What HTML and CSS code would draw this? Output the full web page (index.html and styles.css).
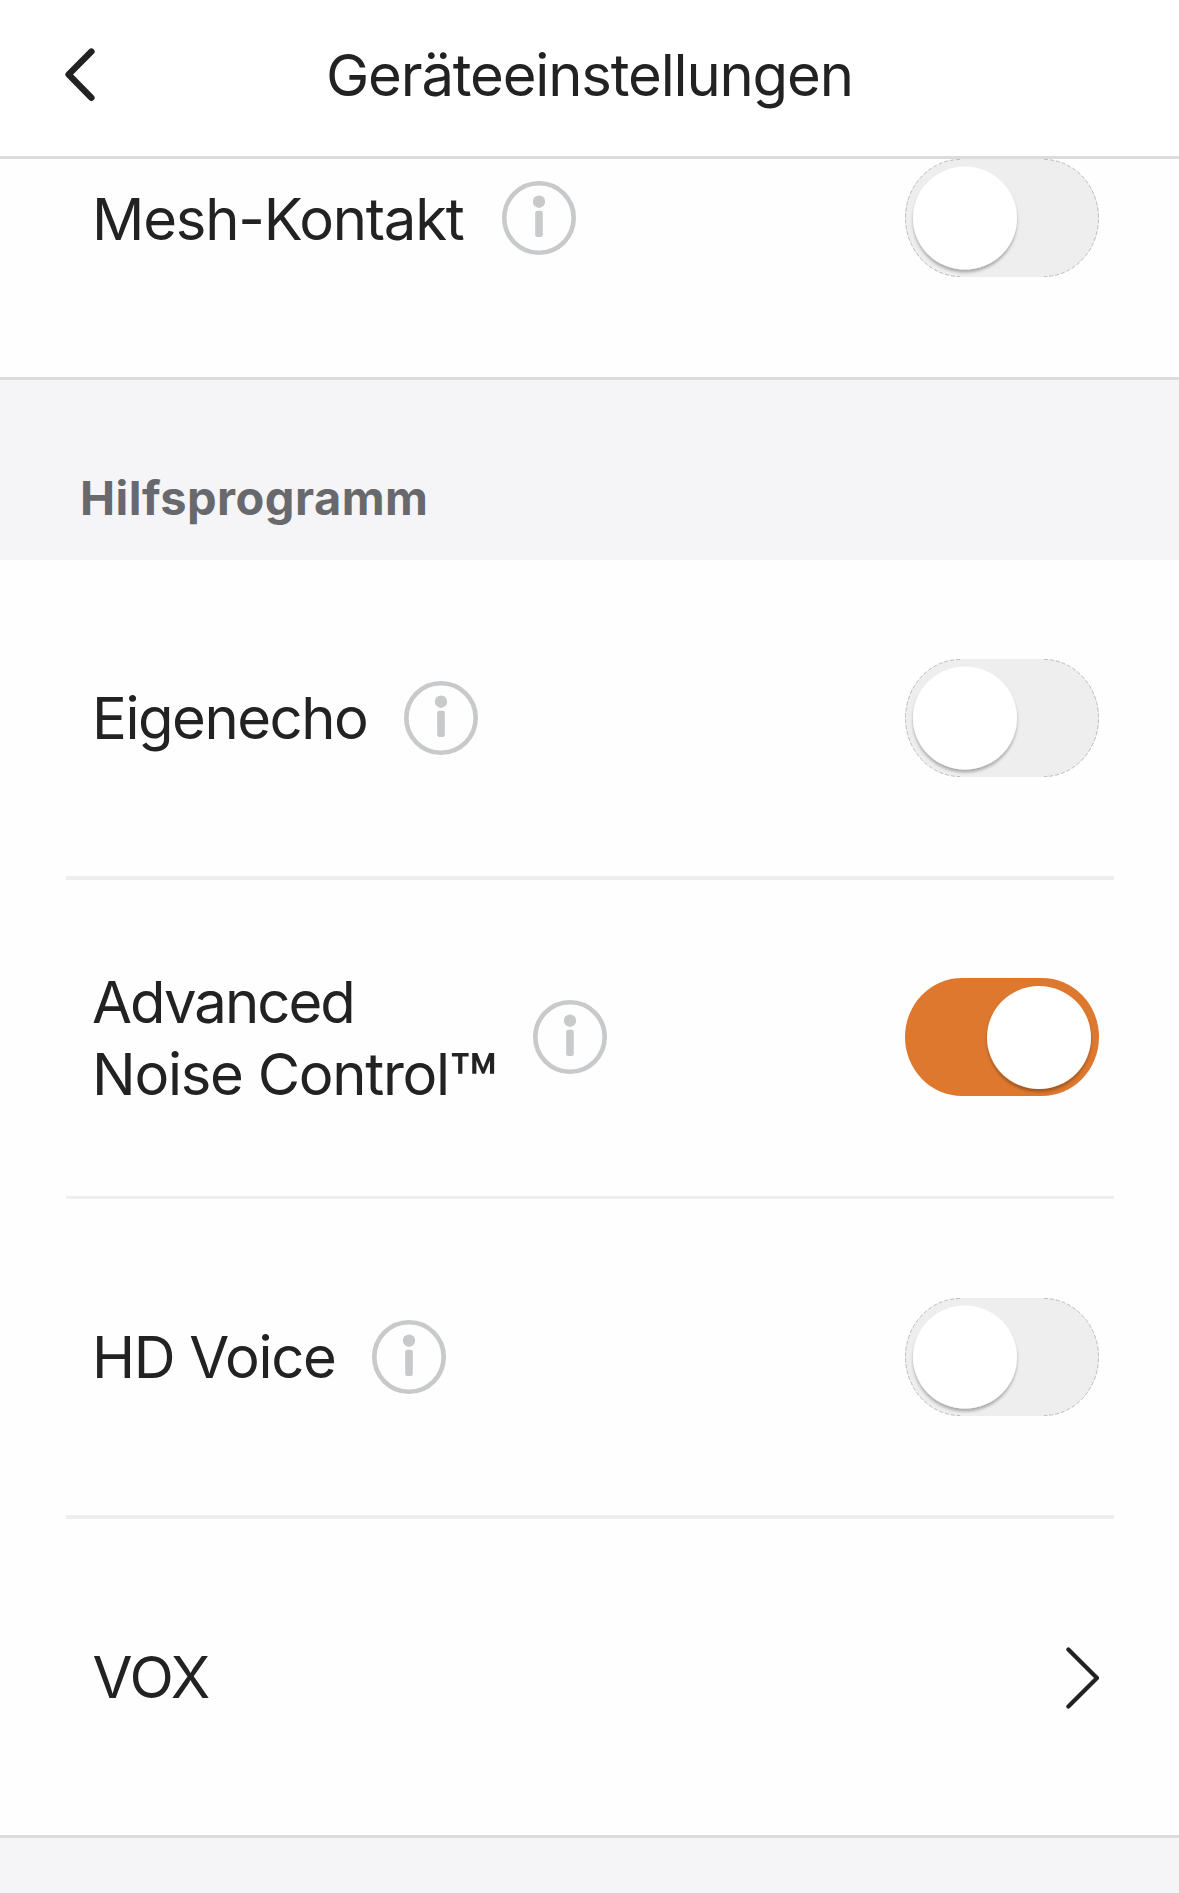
FILE: index.html
```html
<!DOCTYPE html>
<html lang="de">
<head>
<meta charset="utf-8">
<title>Geräteeinstellungen</title>
<link rel="stylesheet" href="styles.css">
</head>
<body>
<svg class="defs" aria-hidden="true">
  <defs>
    <symbol id="info" viewBox="0 0 74 74">
      <circle cx="37" cy="37" r="34.7" fill="none" stroke="#c7c9cb" stroke-width="4.6"/>
      <circle cx="37" cy="20.7" r="6.2" fill="#c7c9cb"/>
      <rect x="33.2" y="29.8" width="7.6" height="26.2" rx="2.2" fill="#c7c9cb"/>
    </symbol>
    <filter id="shadow" x="-20%" y="-20%" width="140%" height="140%">
      <feDropShadow dx="0" dy="3" stdDeviation="1.6" flood-color="#000" flood-opacity="0.28"/>
    </filter>
    <symbol id="toggle-off" viewBox="0 0 194 118">
      <path d="M57 0H137A57 59 0 0 1 137 118H57A57 59 0 0 1 57 0Z" fill="#eeeeee"/>
      <path d="M55 .5A54.5 58.5 0 0 0 55 117.5M139 .5A54.5 58.5 0 0 1 139 117.5" fill="none" stroke="#bdbdbd" stroke-width="1" stroke-dasharray="4 2"/>
      <ellipse cx="60" cy="59" rx="52" ry="51.5" fill="#fff" filter="url(#shadow)"/>
    </symbol>
    <symbol id="toggle-on" viewBox="0 0 194 118">
      <path d="M57 0H137A57 59 0 0 1 137 118H57A57 59 0 0 1 57 0Z" fill="#dd782e"/>
      <ellipse cx="134" cy="59.5" rx="52" ry="51.5" fill="#fff" filter="url(#shadow)"/>
    </symbol>
  </defs>
</svg>

<header class="topbar">
  <svg class="back" viewBox="0 0 30 54" aria-label="Zurück"><path d="M26.4 3.6L3.6 26.6L26.4 49.8" fill="none" stroke="#222" stroke-width="6.4" stroke-linecap="round" stroke-linejoin="round"/></svg>
  <h1 class="title">Geräteeinstellungen</h1>
</header>

<section class="group group-mesh">
  <div class="row">
    <span class="label mesh">Mesh-Kontakt</span>
    <svg class="info raised"><use href="#info"/></svg>
    <svg class="toggle raised"><use href="#toggle-off"/></svg>
  </div>
</section>

<h2 class="section-title">Hilfsprogramm</h2>

<section class="group">
  <div class="row divided-thick">
    <span class="label echo">Eigenecho</span>
    <svg class="info"><use href="#info"/></svg>
    <svg class="toggle"><use href="#toggle-off"/></svg>
  </div>
  <div class="row divided">
    <span class="label noise"><span class="advanced">Advanced</span><br>Noise Control<span class="tm">™</span></span>
    <svg class="info raised"><use href="#info"/></svg>
    <svg class="toggle raised"><use href="#toggle-on"/></svg>
  </div>
  <div class="row divided-thick">
    <span class="label voice">HD Voice</span>
    <svg class="info"><use href="#info"/></svg>
    <svg class="toggle"><use href="#toggle-off"/></svg>
  </div>
  <div class="row">
    <span class="label vox">VOX</span>
    <svg class="chevron" viewBox="0 0 33 62"><path d="M2.4 2.4L31 31L2.4 59.6" fill="none" stroke="#222" stroke-width="4.2" stroke-linecap="round" stroke-linejoin="round"/></svg>
  </div>
</section>
</body>
</html>
```
FILE: styles.css
```css
* { box-sizing: border-box; }

body {
  margin: 0;
  height: 1893px;
  overflow: hidden;
  background: #f5f5f8;
  color: #222;
  font-family: Inter, "Liberation Sans", sans-serif;
}

svg { display: block; flex: none; }
.defs { position: absolute; width: 0; height: 0; }

.topbar {
  display: grid;
  grid-template-columns: 326px 1fr;
  height: 159px;
  background: #fff;
  border-bottom: 3px solid #dcdcdc;
}

.back { width: 30px; height: 54px; margin: 48px 0 0 65px; }

.title {
  margin: 39px 0 0;
  font-size: 58px;
  font-weight: 400;
  line-height: 72px;
  letter-spacing: -1.17px;
}

.group {
  padding: 0 65px 0 66px;
  background: #fefefe;
  border-bottom: 3px solid #dcdce0;
}

.group-mesh { height: 221px; border-bottom-color: #dcdcdc; }
.group-mesh .row { height: 120px; }

.row {
  display: flex;
  align-items: center;
  height: 316px;
  padding: 0 15px 0 26px;
}

.divided { height: 319px; border-bottom: 3px solid #eeeef1; }
.divided-thick { height: 320px; border-bottom: 4px solid #eeeef1; }

.label {
  font-size: 58px;
  line-height: 72px;
  white-space: nowrap;
}

.mesh { letter-spacing: -1.22px; margin-right: 1.7px; }
.echo { letter-spacing: -1.47px; }
.noise { letter-spacing: -1.27px; }
.advanced { letter-spacing: -1.95px; }
.voice { letter-spacing: -1.33px; }
.vox { letter-spacing: -1.1px; margin-left: 0.5px; }

.tm {
  font-size: 79px;
  font-weight: 500;
  line-height: 0;
  vertical-align: -15px;
}

.info { width: 74px; height: 74px; margin-left: 36.8px; }
.toggle { width: 194px; height: 118px; margin-left: auto; }
.raised { margin-bottom: 2px; }
.chevron { width: 33px; height: 62px; margin: 2px 0 0 auto; }

.section-title {
  height: 180px;
  margin: 0;
  padding: 89px 0 0 80px;
  color: #68696d;
  font-size: 47px;
  font-weight: 700;
  line-height: 57px;
  letter-spacing: 0.45px;
}
```
